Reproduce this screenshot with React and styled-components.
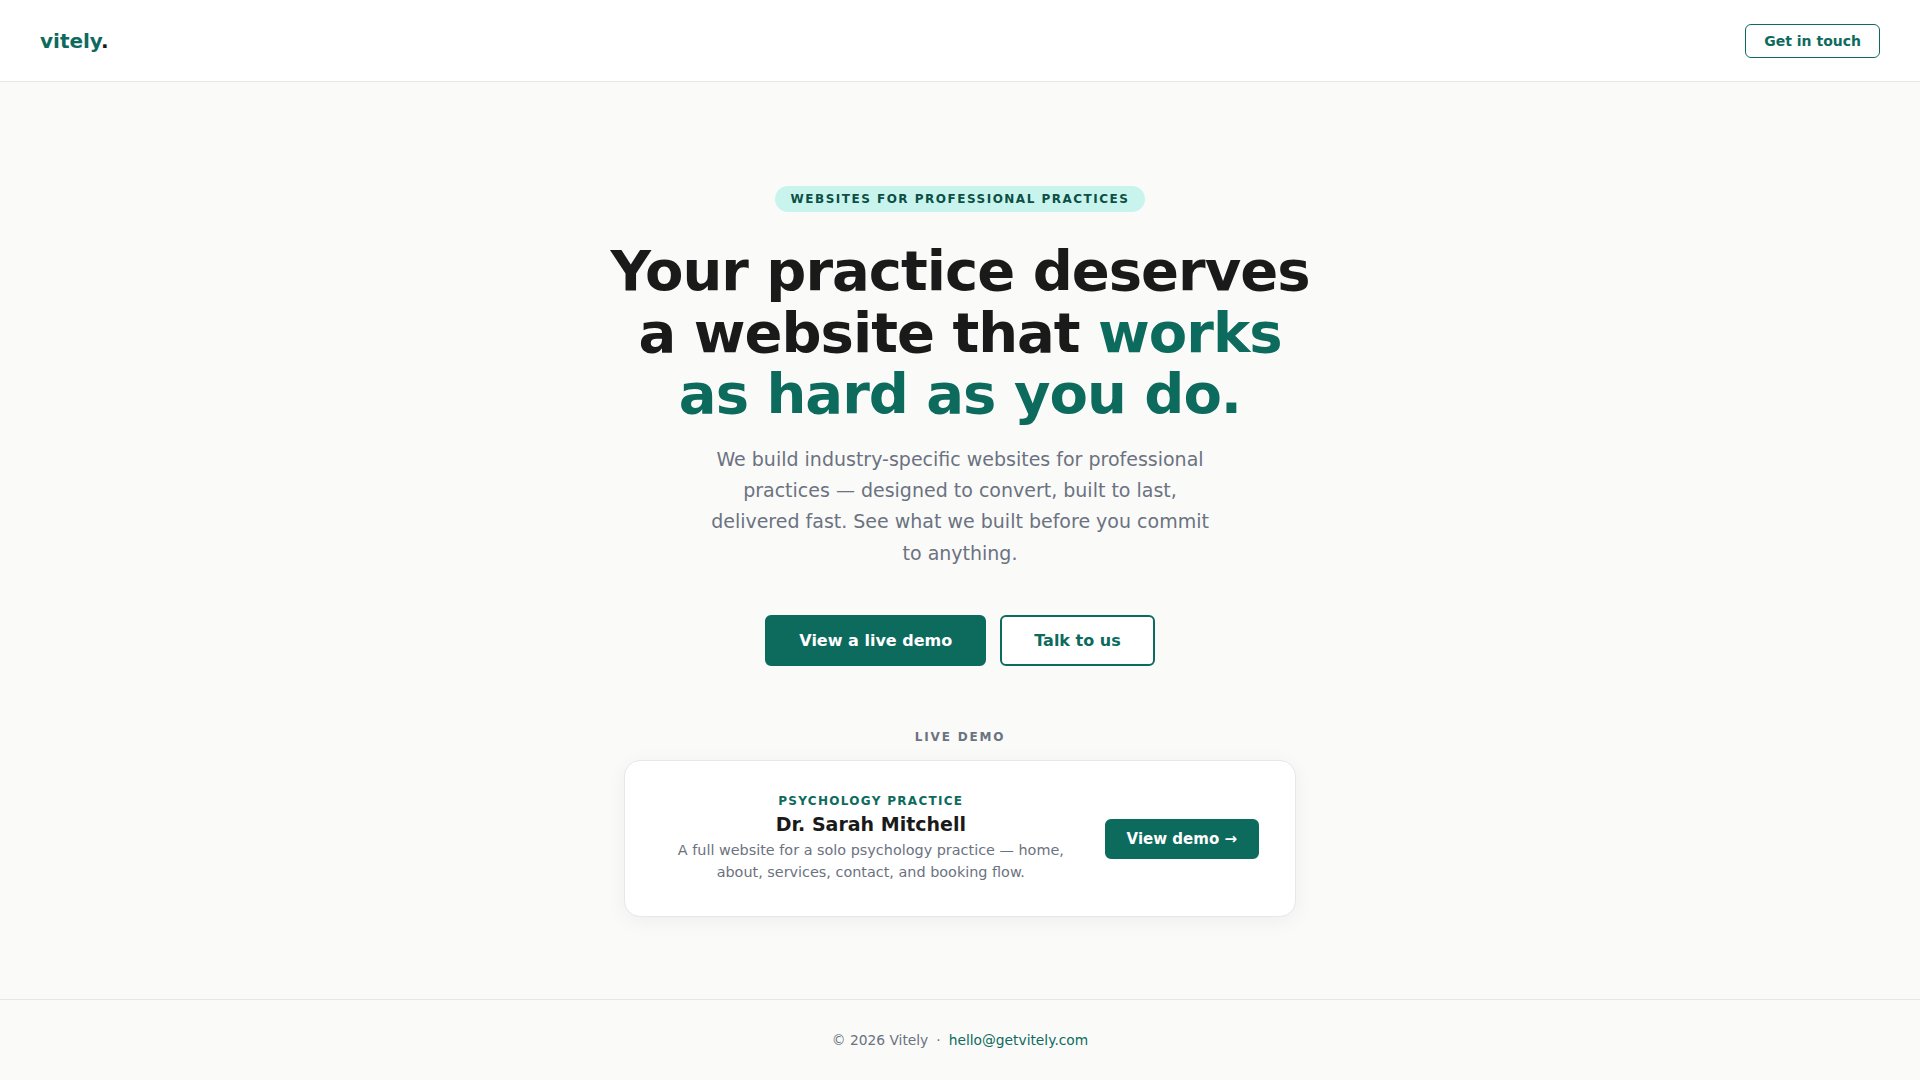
import styled, { createGlobalStyle } from "styled-components";

const GlobalStyle = createGlobalStyle`
	* {
		box-sizing: border-box;
	}
	body {
		margin: 0;
		background: #fafaf9;
		font-family: "DejaVu Sans", "Liberation Sans", sans-serif;
		color: #1a1a1a;
	}
`;

const green = "#0d6b5e";

const Page = styled.div`
	min-height: 100vh;
	display: flex;
	flex-direction: column;
`;

const Header = styled.header`
	height: 82px;
	background: #ffffff;
	border-bottom: 1px solid #e7e7e4;
	display: flex;
	align-items: center;
	justify-content: space-between;
	padding: 0 40px;
`;

const Logo = styled.a`
	font-size: 20px;
	font-weight: 700;
	color: ${green};
	text-decoration: none;
	span {
		color: #1a1a1a;
	}
`;

const OutlineButton = styled.a`
	display: inline-flex;
	align-items: center;
	justify-content: center;
	border: ${(p) => (p.$thick ? "2px" : "1px")} solid ${green};
	border-radius: 6px;
	background: #ffffff;
	color: ${green};
	font-weight: 700;
	font-size: ${(p) => (p.$size === "lg" ? "16px" : "14px")};
	padding: ${(p) => (p.$size === "lg" ? "14px 32px" : "8px 18px")};
	text-decoration: none;
`;

const SolidButton = styled.a`
	display: inline-flex;
	align-items: center;
	justify-content: center;
	border: 2px solid ${green};
	border-radius: 6px;
	background: ${green};
	color: #ffffff;
	font-weight: 700;
	font-size: ${(p) => (p.$size === "lg" ? "16px" : "15px")};
	padding: ${(p) => (p.$size === "lg" ? "14px 32px" : "9px 20px")};
	text-decoration: none;
	white-space: nowrap;
`;

const Main = styled.main`
	flex: 1;
	display: flex;
	flex-direction: column;
	align-items: center;
	padding: 104px 24px 80px;
	text-align: center;
`;

const Badge = styled.div`
	background: #c9f4ee;
	color: #0b4f45;
	font-size: 12px;
	font-weight: 700;
	letter-spacing: 1.5px;
	padding: 6px 16px;
	line-height: 14px;
	border-radius: 999px;
`;

const Title = styled.h1`
	margin: 28px 0 19px;
	font-size: 56px;
	line-height: 1.1;
	font-weight: 700;
	letter-spacing: -1px;
	color: #1a1a1a;
	span {
		color: ${green};
	}
`;

const Lead = styled.p`
	margin: 0;
	max-width: 520px;
	font-size: 19px;
	line-height: 1.65;
	color: #6b7280;
`;

const Actions = styled.div`
	display: flex;
	gap: 14px;
	margin-top: 46px;
`;

const SectionLabel = styled.div`
	margin-top: 64px;
	font-size: 12px;
	font-weight: 700;
	letter-spacing: 1.8px;
	color: #6b7280;
`;

const Card = styled.div`
	margin-top: 16px;
	width: 672px;
	background: #ffffff;
	border: 1px solid #e5e7eb;
	border-radius: 16px;
	box-shadow: 0 4px 20px rgba(0, 0, 0, 0.05);
	padding: 33px 36px 32px;
	display: flex;
	align-items: center;
	gap: 24px;
`;

const CardText = styled.div`
	flex: 1;
	text-align: center;
`;

const Kicker = styled.div`
	font-size: 12px;
	font-weight: 700;
	letter-spacing: 1.3px;
	color: ${green};
	margin-bottom: 5px;
`;

const Name = styled.div`
	font-size: 19px;
	font-weight: 700;
	color: #1a1a1a;
	margin-bottom: 4px;
`;

const Desc = styled.p`
	margin: 0;
	font-size: 14.4px;
	line-height: 1.55;
	color: #6b7280;
`;

const Footer = styled.footer`
	border-top: 1px solid #e7e7e4;
	padding: 32px 24px;
	text-align: center;
	font-size: 13.8px;
	color: #6b7280;
	a {
		color: ${green};
		text-decoration: none;
	}
`;

const Dot = styled.span`
	margin: 0 8px;
`;

export default function App() {
	return (
		<Page>
			<GlobalStyle />
			<Header>
				<Logo href="#">
					vitely<span>.</span>
				</Logo>
				<OutlineButton href="#">Get in touch</OutlineButton>
			</Header>
			<Main>
				<Badge>WEBSITES FOR PROFESSIONAL PRACTICES</Badge>
				<Title>
					Your practice deserves
					<br />a website that <span>works</span>
					<br />
					<span>as hard as you do.</span>
				</Title>
				<Lead>
					We build industry-specific websites for professional practices — designed to
					convert, built to last, delivered fast. See what we built before you commit to
					anything.
				</Lead>
				<Actions>
					<SolidButton href="#" $size="lg">
						View a live demo
					</SolidButton>
					<OutlineButton href="#" $size="lg" $thick>
						Talk to us
					</OutlineButton>
				</Actions>
				<SectionLabel>LIVE DEMO</SectionLabel>
				<Card>
					<CardText>
						<Kicker>PSYCHOLOGY PRACTICE</Kicker>
						<Name>Dr. Sarah Mitchell</Name>
						<Desc>
							A full website for a solo psychology practice — home, about, services,
							contact, and booking flow.
						</Desc>
					</CardText>
					<SolidButton href="#">View demo →</SolidButton>
				</Card>
			</Main>
			<Footer>
				© 2026 Vitely<Dot>·</Dot>
				<a href="#">hello@getvitely.com</a>
			</Footer>
		</Page>
	);
}
